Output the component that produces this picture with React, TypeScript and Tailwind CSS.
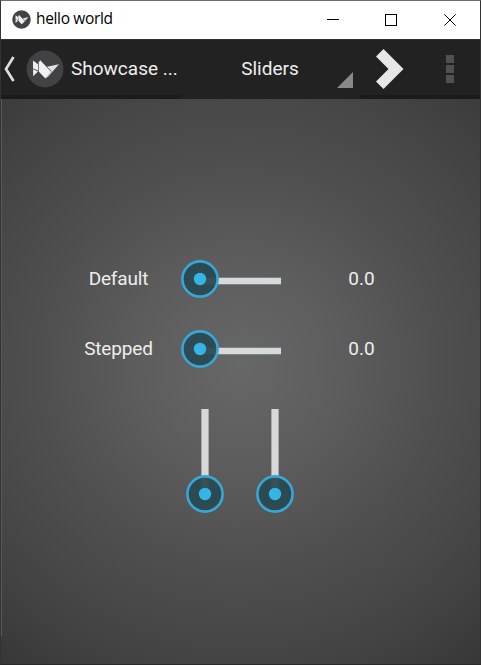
type LogoProps = { className: string };

function Logo({ className }: LogoProps) {
  return (
    <svg className={className} viewBox="0 0 38 38" aria-hidden="true">
      <circle cx="19" cy="19" r="18.5" fill="#414244" />
      <path d="M7 10.5L12 14.2V20.4L7 18.5Z" fill="#eeeeee" />
      <path d="M7 19.2L12 21.5L7.2 26.2Z" fill="#eeeeee" />
      <path d="M14.2 10.2L25.2 21.8L19.4 28.5L12.7 21.5V12.5Z" fill="#f0f0f0" />
      <path d="M20.8 16.8L33 14.2L21.8 27L20 28L25.4 21.6Z" fill="#e0e0e0" />
      <path d="M20.8 17L25.6 21.7" fill="none" stroke="#414244" strokeWidth="0.5" />
    </svg>
  );
}

function Knob() {
  return (
    <svg className="block h-[38px] w-[38px]" viewBox="0 0 38 38" aria-hidden="true">
      <circle cx="19" cy="19" r="17.6" fill="#2b4852" fillOpacity="0.94" stroke="#36a7d6" strokeWidth="2.6" />
      <circle cx="19" cy="19" r="6.2" fill="#33b5e5" />
    </svg>
  );
}

function HorizontalSlider() {
  return (
    <div className="relative h-[38px] w-[100px]">
      <div className="absolute top-[17px] left-[19px] h-2 w-[81px] border-y border-[#71878e] bg-[#d9d9d9]" />
      <div className="absolute top-0 left-0">
        <Knob />
      </div>
    </div>
  );
}

function VerticalSlider() {
  return (
    <div className="relative h-[105px] w-[38px]">
      <div className="absolute top-0 left-[15px] h-[85px] w-2 border-x border-[#aaaaaa] bg-[#d8d8d8]" />
      <div className="absolute top-[66px] left-0">
        <Knob />
      </div>
    </div>
  );
}

function SliderRow({ label, value }: { label: string; value: string }) {
  return (
    <div className="flex h-[70px] items-center">
      <div className="w-[126px] pb-0.5 pl-px text-center tracking-[-0.15px]">{label}</div>
      <HorizontalSlider />
      <div className="ml-[31px] w-[99px] pb-0.5 text-center">{value}</div>
    </div>
  );
}

export default function App() {
  return (
    <div className="relative flex h-[665px] w-[481px] flex-col overflow-hidden border border-t-[#6e6e6e] border-r-[#333333] border-b-[#2b2a2b] border-l-[#333333] font-['Roboto','Liberation_Sans',sans-serif] text-[19px] leading-none text-[#eeeeee]">
      <header className="flex h-[38px] shrink-0 items-center bg-white pl-[11px] text-black">
        <Logo className="mb-0.5 h-[19px] w-[19px]" />
        <h1 className="ml-[5px] flex-1 pb-0.5 font-['Open_Sans','Noto_Sans',sans-serif] text-[15.5px] tracking-[-0.35px]">hello world</h1>
        <svg className="h-[38px] w-[160px]" viewBox="0 0 160 38" fill="none" stroke="#000000" aria-hidden="true">
          <path d="M7 18.5H19" />
          <rect x="65.5" y="13.5" width="11" height="11" />
          <path d="M124.3 13.3L135.7 24.7M135.7 13.3L124.3 24.7" />
        </svg>
      </header>

      <nav className="flex h-[60px] shrink-0 border-t border-[#303030] bg-[#222222]">
        <div className="flex w-[179px] items-center border-b-4 border-[#1b1b1b] pt-0.5">
          <svg className="ml-[2px] h-7 w-3" viewBox="0 0 12 28" aria-hidden="true">
            <path d="M10.5 2L3 14L10.5 26" fill="none" stroke="#dddddd" strokeWidth="2.7" />
          </svg>
          <Logo className="ml-[11px] h-[38px] w-[38px]" />
          <span className="ml-[7px] whitespace-pre">Showcase ...</span>
        </div>
        <div className="relative flex w-[180px] items-center justify-center">
          <span className="pb-0.5">Sliders</span>
          <svg className="absolute right-[7px] bottom-[11px] h-4 w-4" viewBox="0 0 16 16" aria-hidden="true">
            <path d="M0 16H16V0Z" fill="#888888" />
          </svg>
        </div>
        <div className="flex flex-1 items-center border-b-4 border-[#1b1b1b] pt-0.5">
          <svg className="ml-[16px] h-10 w-7" viewBox="0 0 28 40" aria-hidden="true">
            <path d="M7.5 0L27.5 20L7.5 40L0 32.5L12.5 20L0 7.5Z" fill="#e7e7e7" />
          </svg>
          <div className="ml-[42px] flex flex-col gap-[2px]">
            <i className="h-2 w-2 bg-[#505050]" />
            <i className="h-2 w-2 bg-[#505050]" />
            <i className="h-2 w-2 bg-[#505050]" />
          </div>
        </div>
      </nav>

      <main className="flex-1 bg-[radial-gradient(circle_at_239px_266px,#676767_0px,#5d5d5d_100px,#4f4f4f_200px,#484848_265px,#414141_320px,#363636_390px)] pt-[145px] pl-[54px]">
        <SliderRow label="Default" value="0.0" />
        <SliderRow label="Stepped" value="0.0" />
        <div className="mt-[25px] ml-[131px] flex gap-8">
          <VerticalSlider />
          <VerticalSlider />
        </div>
      </main>

      <div className="absolute top-[-1px] left-[61px] ml-40 h-px w-[34px] bg-[#252525]" />
      <div className="absolute top-[98px] left-0 h-[537px] w-px bg-[#5a5a5a]" />
      <div className="absolute top-[244px] left-[-1px] h-[55px] w-px bg-[#285665]" />
      <div className="absolute top-[59px] right-[-1px] h-[62px] w-px bg-[#23657d]" />
      <div className="absolute bottom-[-1px] left-[288px] h-px w-2 bg-[#858585]" />
    </div>
  );
}
